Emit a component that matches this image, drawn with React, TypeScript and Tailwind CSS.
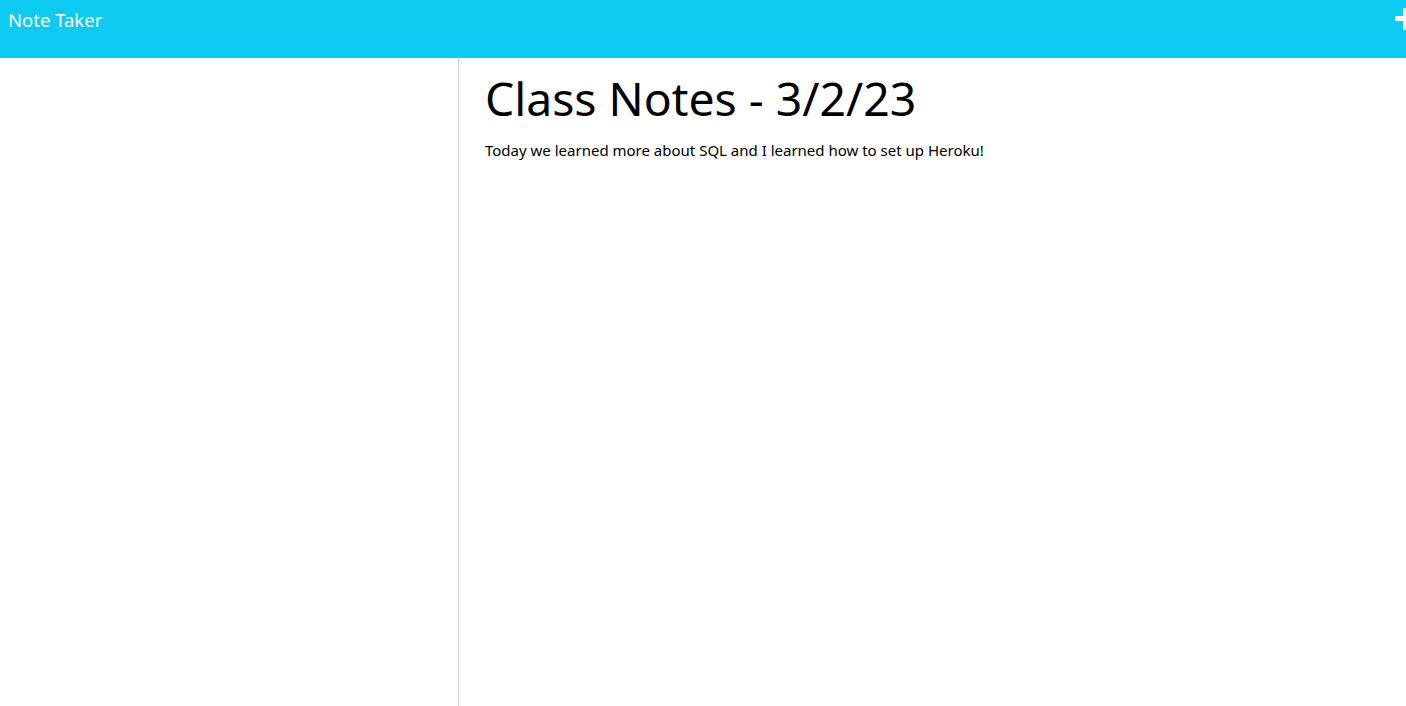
const App = () => {
  return (
    <div className="h-[706px] flex flex-col bg-white overflow-hidden font-['Noto_Sans','Open_Sans',sans-serif]">
      <nav className="h-[58px] shrink-0 bg-[#0dcaf0] flex justify-between items-start overflow-hidden">
        <span className="text-white text-[18.5px] leading-none mt-[11px] ml-[8px]">Note Taker</span>
        <svg width="22" height="22" viewBox="0 0 22 22" className="mt-[8px] -mr-[11px]" fill="#ffffff">
          <rect x="8" y="0" width="5" height="22" rx="1" />
          <rect x="0" y="8" width="22" height="5" rx="1" />
        </svg>
      </nav>
      <div className="flex flex-1">
        <div className="w-[459px] shrink-0 border-r border-[#cccccc]"></div>
        <div className="flex-1 pl-[26px] pt-[13px] text-black">
          <h1 className="text-[46.3px] leading-[56px]">Class Notes - 3/2/23</h1>
          <p className="text-[15px] mt-[12px]">Today we learned more about SQL and I learned how to set up Heroku!</p>
        </div>
      </div>
    </div>
  );
};

export default App;
